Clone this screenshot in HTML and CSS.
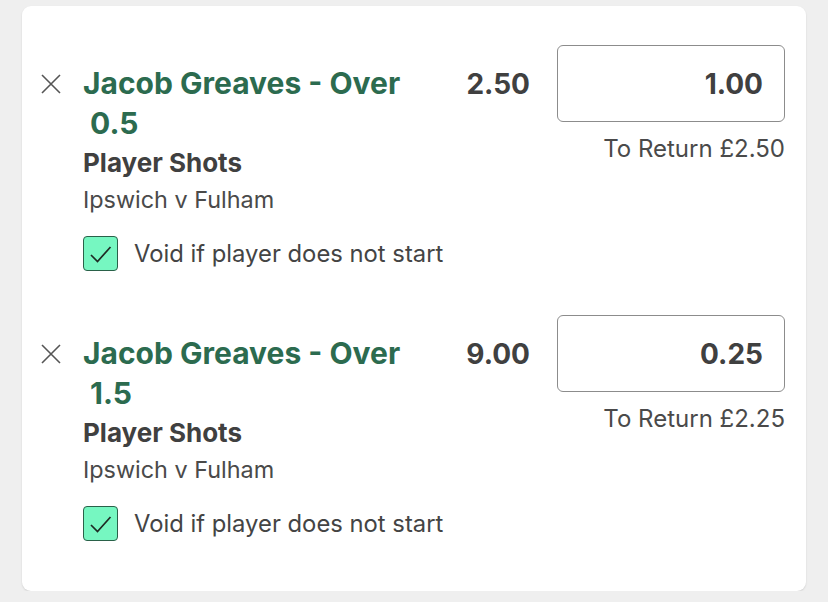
FILE: index.html
```html
<!DOCTYPE html>
<html lang="en">
<head>
<meta charset="utf-8">
<link rel="stylesheet" href="styles.css">
</head>
<body>
<div class="card">
  <div class="bet">
    <button class="remove" aria-label="Remove">
      <svg viewBox="0 0 20 20" width="20" height="20"><path d="M1 1 L19 19 M19 1 L1 19" stroke="#555" stroke-width="1.6" fill="none"/></svg>
    </button>
    <div class="info">
      <div class="title">Jacob Greaves - Over &nbsp;0.5</div>
      <div class="market">Player Shots</div>
      <div class="event">Ipswich v Fulham</div>
      <label class="void">
        <span class="box"><svg viewBox="0 0 35 35" width="35" height="35"><path d="M8 19 L14.5 25.5 L27.5 11" stroke="#1f2a24" stroke-width="1.7" fill="none"/></svg></span>
        <span class="void-text">Void if player does not start</span>
      </label>
    </div>
    <div class="odds">2.50</div>
    <div class="stake">
      <div class="input">1.00</div>
      <div class="return">To Return £2.50</div>
    </div>
  </div>
  <div class="bet">
    <button class="remove" aria-label="Remove">
      <svg viewBox="0 0 20 20" width="20" height="20"><path d="M1 1 L19 19 M19 1 L1 19" stroke="#555" stroke-width="1.6" fill="none"/></svg>
    </button>
    <div class="info">
      <div class="title">Jacob Greaves - Over &nbsp;1.5</div>
      <div class="market">Player Shots</div>
      <div class="event">Ipswich v Fulham</div>
      <label class="void">
        <span class="box"><svg viewBox="0 0 35 35" width="35" height="35"><path d="M8 19 L14.5 25.5 L27.5 11" stroke="#1f2a24" stroke-width="1.7" fill="none"/></svg></span>
        <span class="void-text">Void if player does not start</span>
      </label>
    </div>
    <div class="odds">9.00</div>
    <div class="stake">
      <div class="input">0.25</div>
      <div class="return">To Return £2.25</div>
    </div>
  </div>
</div>
</body>
</html>
```
FILE: styles.css
```css
* { box-sizing: border-box; }
html, body { margin: 0; }
body {
  background: #efefef;
  padding: 6px 22px 0 22px;
  font-family: "Inter", "Liberation Sans", sans-serif;
  color: #3d3d3d;
}
.card {
  background: #fff;
  border-radius: 9px;
  box-shadow: 0 1px 2px rgba(0,0,0,0.12);
  height: 585px;
  padding: 39px 21px 0 19px;
  display: flex;
  flex-direction: column;
  gap: 44px;
}
.bet {
  display: grid;
  grid-template-columns: 20px minmax(0, 1fr) auto 228px;
  column-gap: 22px;
  align-items: start;
}
.remove {
  border: 0;
  background: none;
  padding: 0;
  margin-top: 29px;
  width: 20px;
  height: 20px;
  display: block;
}
.remove svg { display: block; }
.info { padding-top: 18px; }
.title {
  color: #2c6b4f;
  font-weight: 700;
  font-size: 30px;
  line-height: 40px;
  width: 350px;
}
.market {
  font-weight: 700;
  font-size: 26px;
  line-height: 34px;
  margin-top: 3px;
  color: #404040;
}
.event {
  font-size: 23.4px;
  line-height: 34px;
  color: #4a4a4a;
  margin-top: 3px;
}
.void {
  display: flex;
  align-items: center;
  gap: 16px;
  margin-top: 19px;
}
.box {
  flex: none;
  width: 35px;
  height: 35px;
  border: 1.5px solid #2a6149;
  border-radius: 4px;
  background: #76f7c1;
  position: relative;
}
.box svg { position: absolute; left: -1.5px; top: -1.5px; display: block; }
.void-text {
  font-size: 23.8px;
  color: #444;
  white-space: nowrap;
}
.odds {
  padding-top: 19px;
  font-size: 28px;
  font-weight: 700;
  line-height: 40px;
  margin-right: 5px;
  color: #404040;
}
.stake {
  display: flex;
  flex-direction: column;
  align-items: flex-end;
}
.input {
  width: 228px;
  height: 77px;
  border: 1.5px solid #8c8c8c;
  border-radius: 6px;
  display: flex;
  align-items: center;
  justify-content: flex-end;
  padding-right: 21px;
  font-size: 28px;
  font-weight: 700;
  color: #404040;
}
.return {
  margin-top: 13px;
  font-size: 24px;
  line-height: 28px;
  color: #4a4a4a;
}
```
